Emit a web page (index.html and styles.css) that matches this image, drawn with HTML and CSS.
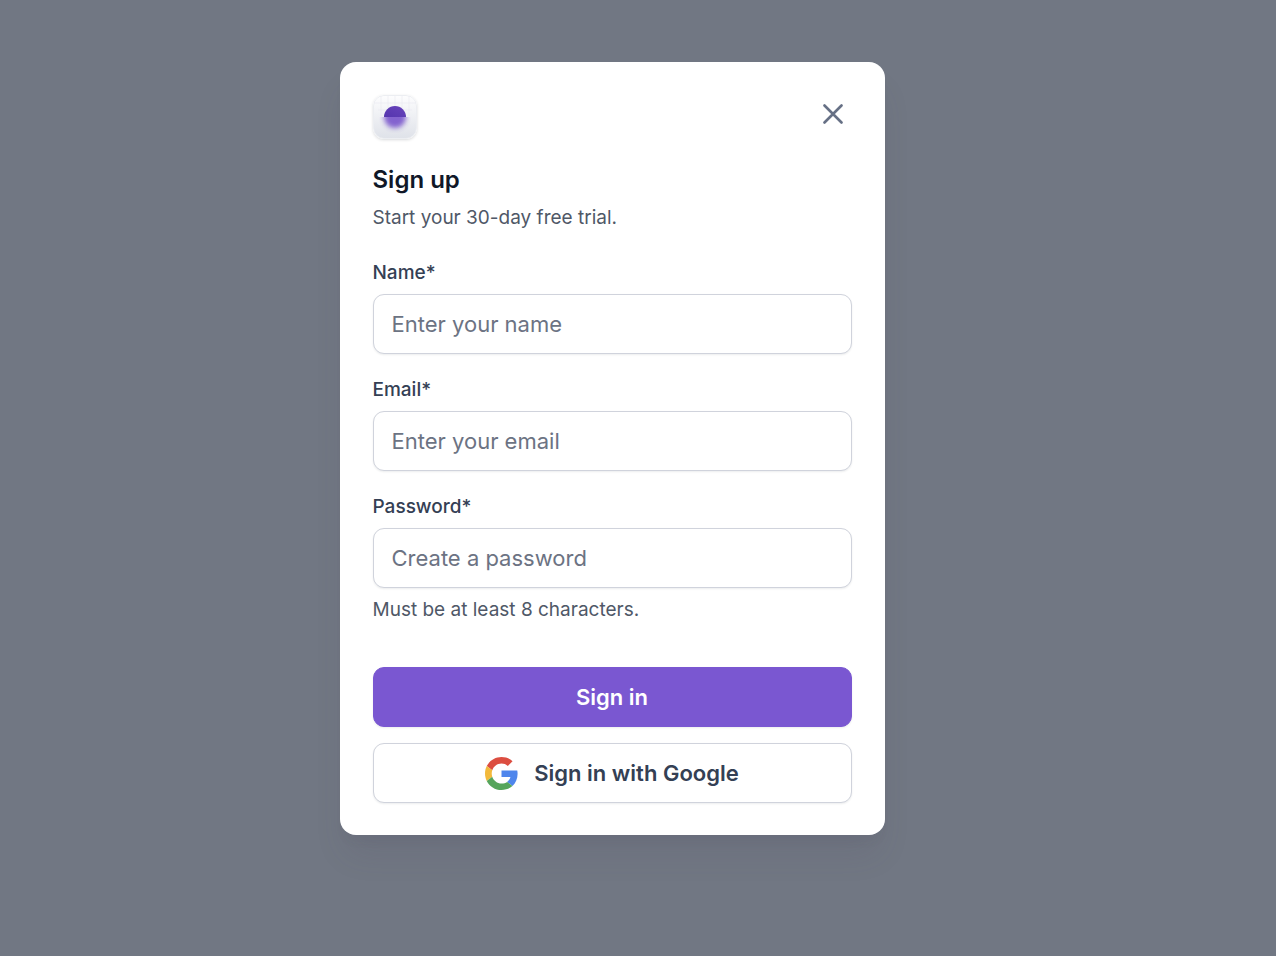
FILE: index.html
```html
<!DOCTYPE html>
<html lang="en">
<head>
<meta charset="utf-8">
<meta name="viewport" content="width=device-width, initial-scale=1">
<title>Sign up</title>
<link rel="stylesheet" href="styles.css">
</head>
<body>
<main class="overlay">
  <section class="modal" role="dialog" aria-modal="true" aria-labelledby="modal-title">
    <div class="modal-top">
      <svg class="logo" viewBox="0 0 44 44" aria-hidden="true">
        <defs>
          <linearGradient id="tile" x1="0" y1="0" x2="0" y2="1">
            <stop offset="0" stop-color="#fdfdfe"/>
            <stop offset="1" stop-color="#dfe2e9"/>
          </linearGradient>
          <linearGradient id="dome" x1="0" y1="1" x2="1" y2="0">
            <stop offset="0" stop-color="#5535ae"/>
            <stop offset="1" stop-color="#6843bb"/>
          </linearGradient>
          <filter id="soft" x="-50%" y="-50%" width="200%" height="200%">
            <feGaussianBlur stdDeviation="2.600"/>
          </filter>
          <clipPath id="lower"><rect x="0" y="22" width="44" height="22"/></clipPath>
        </defs>
        <rect x="0.5" y="0.5" width="43" height="43" rx="10.500" fill="url(#tile)" stroke="#eceef2"/>
        <path d="M1 8h42M5 15h34M8 1v20M15 1v12M22 1v10M29 1v12M36 1v20" stroke="#e4e7ee" stroke-width="0.500" fill="none"/>
        <g clip-path="url(#lower)"><circle cx="22" cy="22" r="11" fill="#6941c6" opacity="0.800" filter="url(#soft)"/></g>
        <path d="M11 22a11 11 0 0 1 22 0z" fill="url(#dome)"/>
      </svg>
      <button class="close" type="button" aria-label="Close">
        <svg class="close-icon" viewBox="0 0 20 20" aria-hidden="true"><path d="M1.500 1.500l17 17M18.500 1.500l-17 17"/></svg>
      </button>
    </div>
    <header class="heading">
      <h1 class="title" id="modal-title">Sign up</h1>
      <p class="text">Start your 30-day free trial.</p>
    </header>
    <form class="form">
      <div class="field">
        <label class="label" for="name">Name*</label>
        <input class="input" id="name" type="text" placeholder="Enter your name">
      </div>
      <div class="field">
        <label class="label" for="email">Email*</label>
        <input class="input" id="email" type="email" placeholder="Enter your email">
      </div>
      <div class="field">
        <label class="label" for="password">Password*</label>
        <input class="input" id="password" type="password" placeholder="Create a password" aria-describedby="hint">
        <p class="text" id="hint">Must be at least 8 characters.</p>
      </div>
      <div class="actions">
        <button class="button primary" type="submit">Sign in</button>
        <button class="button secondary" type="button">
          <svg class="google" viewBox="0 0 48 48" aria-hidden="true">
            <path fill="#dc4e41" d="M24 9.500c3.540 0 6.710 1.220 9.210 3.600l6.850-6.850C35.900 2.380 30.470 0 24 0 14.620 0 6.510 5.380 2.560 13.220l7.980 6.190C12.430 13.720 17.740 9.500 24 9.500z"/>
            <path fill="#4f86ec" d="M47.400 24.550c0-1.570-.15-3.390-.48-5.050H24v9.520h12.940c-.58 2.960-2.260 5.480-4.780 7.180l7.730 6c4.510-4.180 7.510-10.360 7.510-17.650z"/>
            <path fill="#f2b93b" d="M10.530 28.590c-.48-1.450-.76-2.990-.76-4.590s.27-3.140.76-4.590l-7.980-6.190C.92 16.460 0 20.120 0 24c0 3.880.92 7.540 2.560 10.780l7.970-6.190z"/>
            <path fill="#56a55b" d="M24 48c6.480 0 11.930-2.130 15.890-5.810l-7.730-6c-2.150 1.450-4.920 2.300-8.160 2.300-6.260 0-11.570-4.220-13.470-9.910l-7.980 6.190C6.510 42.620 14.620 48 24 48z"/>
          </svg>
          <span>Sign in with Google</span>
        </button>
      </div>
    </form>
  </section>
</main>
</body>
</html>
```
FILE: styles.css
```css
* { box-sizing: border-box; }

body {
  margin: 0;
  font-family: Inter, "Liberation Sans", sans-serif;
  background: #717783;
}

.overlay {
  display: flex;
  justify-content: center;
  align-items: flex-start;
  min-height: 100vh;
  padding: 62px 52px 62px 0;
}

.modal {
  width: 100%;
  max-width: 545px;
  padding: 33px 33px 32px;
  border-radius: 16px;
  background: #fff;
  box-shadow: 0 24px 32px -6px rgba(72, 64, 88, 0.12), 0 10px 12px -5px rgba(72, 64, 88, 0.06);
}

.modal-top {
  display: flex;
  justify-content: space-between;
  align-items: flex-start;
}

.logo {
  width: 44px;
  height: 44px;
  border-radius: 11px;
  box-shadow: 0 1px 3px rgba(16, 24, 40, 0.16);
}

.close {
  display: flex;
  padding: 9px;
  border: 0;
  background: none;
}

.close-icon {
  width: 20px;
  height: 20px;
  fill: none;
  stroke: #667085;
  stroke-width: 2.600;
  stroke-linecap: round;
}

.heading {
  display: grid;
  gap: 5px;
  margin: 22px 0 28px;
}

.title {
  margin: 0;
  font-size: 24px;
  line-height: 38px;
  font-weight: 600;
  color: #101828;
}

.text {
  margin: 0;
  font-size: 19px;
  line-height: 27px;
  color: #4f5867;
}

.form {
  display: grid;
  gap: 22px;
}

.field {
  display: grid;
  gap: 8px;
}

.label {
  font-size: 19px;
  line-height: 27px;
  font-weight: 500;
  color: #344054;
}

.input,
.button {
  width: 100%;
  height: 60px;
  border: 1px solid #d0d3dc;
  border-radius: 11px;
  background: #fff;
  font-family: inherit;
  font-size: 22px;
  box-shadow: 0 1px 2px rgba(16, 24, 40, 0.08);
}

.input {
  padding: 0 18px;
  color: #101828;
}

.input::placeholder {
  color: #6c7383;
  opacity: 1;
}

.actions {
  display: grid;
  gap: 16px;
  margin-top: 22px;
}

.button {
  display: flex;
  justify-content: center;
  align-items: center;
  gap: 16px;
  font-weight: 600;
}

.primary {
  border-color: #7a57d1;
  background: #7a57d1;
  color: #fff;
}

.secondary { color: #344054; }

.google {
  width: 33px;
  height: 33px;
}
```
